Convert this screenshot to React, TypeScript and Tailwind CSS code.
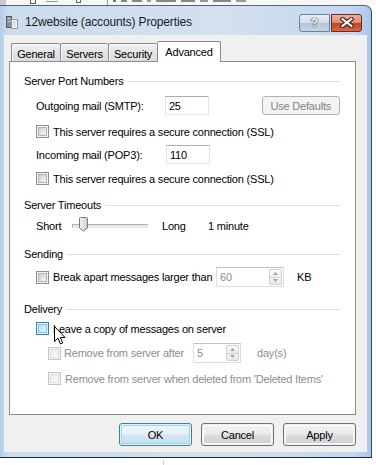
import React from "react";

type CbState = "normal" | "hover" | "disabled";

function Checkbox({ state }: { state: CbState }) {
  const outer =
    state === "hover"
      ? "border-[#3c7fb1] bg-[#def9fa]"
      : state === "disabled"
      ? "border-[#c6c6c6] bg-[#f4f4f4]"
      : "border-[#8e8f8f] bg-[#f4f4f4]";
  const inner =
    state === "hover"
      ? "bg-gradient-to-br from-[#b1dffd] to-[#e9f7fe] border-[#79c6f9]"
      : state === "disabled"
      ? "bg-gradient-to-br from-[#ececec] to-[#fafafa] border-[#dedede]"
      : "bg-gradient-to-br from-[#cbcfd5] to-[#f7f7f7] border-[#aeb3b9]";
  return (
    <div className={`w-[13px] h-[13px] shrink-0 border ${outer} p-[1px]`}>
      <div className={`w-full h-full border ${inner}`} />
    </div>
  );
}

function GroupHeader({ label }: { label: string }) {
  return (
    <div className="flex items-center h-[14px]">
      <span className="leading-[14px] whitespace-nowrap">{label}</span>
      <div className="flex-1 ml-[4px] mt-[1px] border-t border-[#d5dfe5] border-b border-b-white" />
    </div>
  );
}

function TextBox({ value, w }: { value: string; w: string }) {
  return (
    <div
      className={`${w} h-[19px] bg-white border border-[#e2e3ea] border-t-[#abadb3] border-b-[#e3e9ef] flex items-center pl-[3px]`}
    >
      <span className="leading-[14px]">{value}</span>
    </div>
  );
}

function SpinArrow({ up }: { up: boolean }) {
  return (
    <svg width="5" height="3" viewBox="0 0 5 3">
      {up ? (
        <path d="M0 3 L2.5 0 L5 3 Z" fill="#a4a4a4" />
      ) : (
        <path d="M0 0 L2.5 3 L5 0 Z" fill="#a4a4a4" />
      )}
    </svg>
  );
}

function SpinBox({ value, w }: { value: string; w: string }) {
  return (
    <div
      className={`${w} h-[20px] bg-white border border-[#d9dce0] border-t-[#bfc3c8] flex items-stretch`}
    >
      <div className="flex-1 flex items-center pl-[3px] text-[#8d8d8d]">
        <span className="leading-[14px]">{value}</span>
      </div>
      <div className="w-[14px] flex flex-col py-[1px] pr-[1px]">
        <div className="flex-1 border border-[#cfd2d5] rounded-t-[2px] bg-gradient-to-b from-[#fbfbfb] to-[#eeeeee] flex items-center justify-center">
          <SpinArrow up />
        </div>
        <div className="flex-1 border border-t-0 border-[#cfd2d5] rounded-b-[2px] bg-gradient-to-b from-[#f4f4f4] to-[#e6e6e6] flex items-center justify-center">
          <SpinArrow up={false} />
        </div>
      </div>
    </div>
  );
}

function CheckRow({
  state,
  label,
  indent,
  mt,
  labelColor,
}: {
  state: CbState;
  label: string;
  indent: string;
  mt: string;
  labelColor?: string;
}) {
  return (
    <div className={`flex items-center h-[13px] ${indent} ${mt}`}>
      <Checkbox state={state} />
      <span className={`ml-[4px] leading-[14px] whitespace-nowrap ${labelColor ?? ""}`}>{label}</span>
    </div>
  );
}

function DlgButton({ label, primary }: { label: string; primary?: boolean }) {
  return (
    <div
      className={`w-[73px] h-[23px] rounded-[3px] border ${
        primary ? "border-[#3c7fb1]" : "border-[#707070]"
      } p-px`}
    >
      <div
        className={`w-full h-full rounded-[2px] flex items-center justify-center ${
          primary
            ? "bg-[linear-gradient(#eef6fb_0%,#e5f0f8_48%,#d5e6f2_52%,#c8deee_100%)] shadow-[inset_0_0_0_1px_#8fd8f7]"
            : "bg-[linear-gradient(#f2f2f2_0%,#ebebeb_48%,#dddddd_52%,#cfcfcf_100%)] shadow-[inset_0_0_0_1px_#fcfcfc]"
        }`}
      >
        <span className="leading-[14px]">{label}</span>
      </div>
    </div>
  );
}

function Tab({ label, w, selected }: { label: string; w: string; selected?: boolean }) {
  if (selected) {
    return (
      <div
        className={`${w} h-[21px] -ml-px bg-white border border-b-0 border-[#898c95] rounded-t-[2px] flex justify-center pt-[3px] relative z-10`}
      >
        <span className="leading-[14px]">{label}</span>
      </div>
    );
  }
  return (
    <div
      className={`${w} h-[19px] bg-[linear-gradient(#f2f2f2,#e4e4e4_50%,#dcdcdc)] border border-[#898c95] border-r-0 first:border-l rounded-t-[2px] flex justify-center pt-[3px] shadow-[inset_1px_1px_0_#fafafa]`}
    >
      <span className="leading-[14px]">{label}</span>
    </div>
  );
}

function Slider() {
  return (
    <div className="w-[76px] h-[20px] relative flex items-center">
      <div className="w-full h-[4px] border border-[#b0b0b0] border-b-[#e7eaea] border-r-[#e7eaea] bg-[#e7eaea]" />
      <svg
        className="absolute left-[7px] top-[1px]"
        width="9"
        height="15"
        viewBox="0 0 9 15"
      >
        <defs>
          <linearGradient id="thumb" x1="0" y1="0" x2="1" y2="0">
            <stop offset="0" stopColor="#f2f2f2" />
            <stop offset="1" stopColor="#d0d0d0" />
          </linearGradient>
        </defs>
        <path
          d="M1.5 0.5 H7.5 Q8.5 0.5 8.5 1.5 V11 L4.5 14.2 L0.5 11 V1.5 Q0.5 0.5 1.5 0.5 Z"
          fill="url(#thumb)"
          stroke="#7a7a7a"
        />
      </svg>
    </div>
  );
}

export default function App() {
  return (
    <div className="w-[376px] h-[465px] bg-white relative overflow-hidden font-['Liberation_Sans',Arial,sans-serif] text-[11px] tracking-[-0.2px] text-black">
      {/* Background window strip (only the very bottom of another window shows) */}
      <div className="h-[5px] relative overflow-hidden bg-[#f7f7f7]">
        <div className="absolute left-0 top-0 w-[6px] h-[5px] bg-[#c9c9c9]" />
        <div className="absolute left-[30px] top-0 w-[6px] h-[4px] border border-t-0 border-[#555]" />
        <div className="absolute left-[46px] top-[1px] w-[12px] h-[4px] border-t border-[#999]" />
        <div className="absolute left-[76px] top-0 w-[5px] h-[3px] border border-t-0 border-[#666]" />
        <div className="absolute left-[107px] top-0 w-px h-[5px] bg-[#999]" />
        <div className="absolute left-[113px] top-0 flex gap-[5px] items-start">
          <div className="w-[3px] h-[2px] bg-[#777]" />
          <div className="w-[6px] h-[2px] bg-[#888]" />
          <div className="w-[10px] h-[2px] bg-[#888]" />
          <div className="w-[4px] h-[2px] bg-[#999]" />
          <div className="w-[20px] h-[2px] bg-[#888]" />
          <div className="w-[14px] h-[2px] bg-[#888]" />
          <div className="w-[8px] h-[2px] bg-[#999]" />
          <div className="w-[18px] h-[2px] bg-[#888]" />
          <div className="w-[10px] h-[2px] bg-[#999]" />
        </div>
      </div>

      {/* Window */}
      <div className="w-[372px] h-[453px] rounded-tr-[7px] border-t border-r border-b border-t-[#55657a] border-r-[#3a4a5e] border-b-[#1f2b36] bg-[linear-gradient(90deg,#b4cce8_0px,#cbdcee_8px,#d3e0ee_60%,#c3d7ee_95%,#a9c6e8_100%)] flex flex-col">
        {/* Title bar */}
        <div className="h-[29px] flex items-center pr-[9px] shrink-0">
          <svg className="ml-[6px] mt-[2px]" width="13" height="14" viewBox="0 0 13 14">
            <rect x="0.5" y="1.5" width="5" height="11" fill="#8a8f96" stroke="#555b63" />
            <rect x="1.5" y="3" width="3" height="1" fill="#c9ccd0" />
            <rect x="1.5" y="6" width="3" height="1" fill="#c9ccd0" />
            <path d="M5.5 4.5 H11.5 V13.5 H5.5 Z" fill="#ffffff" stroke="#8d939a" />
            <path d="M6.5 7 H10.5 M6.5 9 H10.5 M6.5 11 H9.5" stroke="#b9bec4" strokeWidth="1" />
          </svg>
          <span className="ml-[6px] mt-[2px] text-[12px] tracking-[-0.15px] text-[#1b1b1b] leading-[16px] whitespace-nowrap">
            12website (accounts) Properties
          </span>
          <div className="flex-1" />
          <div className="flex mt-[4px] h-[18px]">
            <div className="w-[31px] h-[18px] rounded-l-[3px] border border-[#6f819a] bg-[linear-gradient(#e6edf5_0%,#d3deeb_48%,#b3c6dd_52%,#c5d6ea_100%)] flex items-center justify-center">
              <span className="font-bold text-[13px] text-white leading-[14px] tracking-normal [text-shadow:0_0_1px_#2d3e55,0_0_1px_#2d3e55,0_0_1px_#2d3e55]">
                ?
              </span>
            </div>
            <div className="w-[31px] h-[18px] ml-px rounded-r-[3px] border border-[#6b2a1e] bg-[linear-gradient(#ecb1a1_0%,#dd8b74_48%,#c4411d_52%,#d9694a_100%)] flex items-center justify-center">
              <svg width="14" height="11" viewBox="0 0 14 11">
                <path
                  d="M2.5 2 L11.5 9 M11.5 2 L2.5 9"
                  stroke="#3b1812"
                  strokeWidth="4.2"
                  strokeLinecap="square"
                  fill="none"
                />
                <path
                  d="M2.5 2 L11.5 9 M11.5 2 L2.5 9"
                  stroke="#ffffff"
                  strokeWidth="2.2"
                  strokeLinecap="square"
                  fill="none"
                />
              </svg>
            </div>
          </div>
        </div>

        {/* Client area */}
        <div className="mx-[4px] h-[417px] bg-[#f0f0f0] flex flex-col">
          {/* Tabs */}
          <div className="mt-[6px] pl-[7px] flex items-end h-[21px] relative z-10">
            <Tab label="General" w="w-[49px]" />
            <Tab label="Servers" w="w-[48px]" />
            <Tab label="Security" w="w-[49px]" />
            <div className="w-px h-[19px] border-l border-[#898c95]" />
            <Tab label="Advanced" w="w-[64px]" selected />
          </div>

          {/* Tab panel */}
          <div className="ml-[5px] -mt-px w-[347px] h-[354px] bg-white border border-[#898c95] flex flex-col pl-[14px] pr-[15px]">
            <div className="mt-[12px]">
              <GroupHeader label="Server Port Numbers" />
            </div>

            <div className="mt-[8px] h-[19px] flex items-center ml-[12px]">
              <span className="w-[130px] leading-[14px]">Outgoing mail (SMTP):</span>
              <TextBox value="25" w="w-[44px]" />
              <div className="ml-[53px] w-[79px] h-[19px] rounded-[3px] border border-[#adb2b5] bg-[#f4f4f4] flex items-center justify-center">
                <span className="text-[#838383] leading-[14px]">Use Defaults</span>
              </div>
            </div>

            <CheckRow
              state="normal"
              label="This server requires a secure connection (SSL)"
              indent="ml-[12px]"
              mt="mt-[10px]"
            />

            <div className="mt-[7px] h-[19px] flex items-center ml-[12px]">
              <span className="w-[130px] leading-[14px]">Incoming mail (POP3):</span>
              <TextBox value="110" w="w-[44px]" />
            </div>

            <CheckRow
              state="normal"
              label="This server requires a secure connection (SSL)"
              indent="ml-[12px]"
              mt="mt-[8px]"
            />

            <div className="mt-[13px]">
              <GroupHeader label="Server Timeouts" />
            </div>

            <div className="mt-[4px] h-[20px] flex items-center ml-[12px]">
              <span className="w-[36px] leading-[14px]">Short</span>
              <Slider />
              <span className="ml-[14px] w-[46px] leading-[14px]">Long</span>
              <span className="leading-[14px]">1 minute</span>
            </div>

            <div className="mt-[11px]">
              <GroupHeader label="Sending" />
            </div>

            <div className="mt-[6px] h-[20px] flex items-center ml-[12px]">
              <Checkbox state="normal" />
              <span className="ml-[4px] w-[163px] leading-[14px] whitespace-nowrap">
                Break apart messages larger than
              </span>
              <SpinBox value="60" w="w-[68px]" />
              <span className="ml-[13px] leading-[14px]">KB</span>
            </div>

            <div className="mt-[15px]">
              <GroupHeader label="Delivery" />
            </div>

            <CheckRow
              state="hover"
              label="Leave a copy of messages on server"
              indent="ml-[12px]"
              mt="mt-[6px]"
            />

            <div className="mt-[8px] h-[20px] flex items-center ml-[24px]">
              <Checkbox state="disabled" />
              <span className="ml-[3px] w-[129px] leading-[14px] whitespace-nowrap text-[#8d8d8d]">
                Remove from server after
              </span>
              <SpinBox value="5" w="w-[48px]" />
              <span className="ml-[16px] leading-[14px] text-[#8d8d8d]">day(s)</span>
            </div>

            <CheckRow
              state="disabled"
              label="Remove from server when deleted from 'Deleted Items'"
              indent="ml-[24px]"
              mt="mt-[9px]"
              labelColor="text-[#8d8d8d]"
            />
          </div>

          {/* Buttons */}
          <div className="mt-[8px] flex justify-end gap-[9px] pr-[11px]">
            <DlgButton label="OK" primary />
            <DlgButton label="Cancel" />
            <DlgButton label="Apply" />
          </div>
        </div>
      </div>

      {/* Below window */}
      <div className="h-[7px] pl-[163px] pt-[2px]">
        <div className="w-px h-full bg-[#d0d0d0]" />
      </div>

      {/* Mouse cursor */}
      <svg
        className="absolute left-[54px] top-[326px]"
        width="13"
        height="20"
        viewBox="0 0 13 20"
      >
        <path
          d="M0.5 0.5 L0.5 15.5 L4 12.2 L6.5 18 L8.7 17 L6.3 11.5 L11 11.5 Z"
          fill="#ffffff"
          stroke="#000000"
          strokeWidth="1"
          strokeLinejoin="miter"
        />
      </svg>
    </div>
  );
}
